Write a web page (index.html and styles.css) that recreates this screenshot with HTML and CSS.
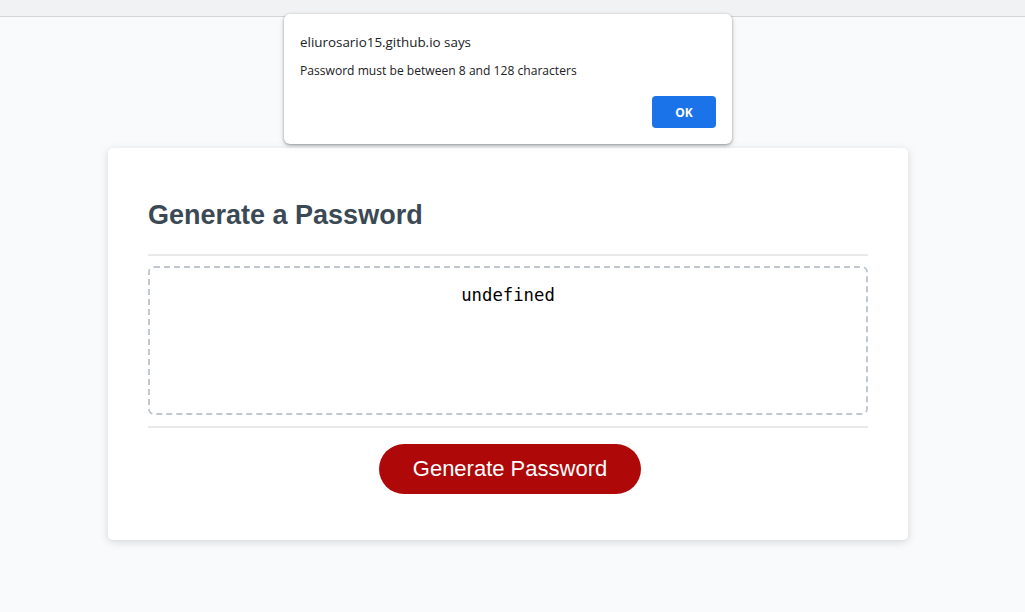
FILE: index.html
```html
<!DOCTYPE html>
<html lang="en">
<head>
<meta charset="UTF-8">
<title>Password Generator</title>
<link rel="stylesheet" href="styles.css">
</head>
<body>
<div class="topbar"></div>
<div class="wrapper">
  <div class="card">
    <div class="card-header">
      <h2>Generate a Password</h2>
    </div>
    <div class="card-body">
      <textarea readonly id="password" class="password" aria-label="Generated Password">undefined</textarea>
    </div>
    <div class="card-footer">
      <button class="btn">Generate Password</button>
    </div>
  </div>
</div>
<div class="dialog" role="alertdialog">
  <div class="dialog-title">eliurosario15.github.io says</div>
  <div class="dialog-msg">Password must be between 8 and 128 characters</div>
  <div class="dialog-actions">
    <button class="dialog-ok">OK</button>
  </div>
</div>
</body>
</html>
```

FILE: styles.css
```css
* { box-sizing: border-box; }

html, body {
  margin: 0;
  padding: 0;
  height: 100%;
}

body {
  font-family: "Liberation Sans", Arial, sans-serif;
  background-color: #f9fafb;
  overflow: hidden;
}

.topbar {
  height: 17px;
  background: #f1f2f3;
  border-bottom: 1px solid #d3d4d6;
}

.wrapper {
  padding: 131px 9px 0 0;
}

.card {
  background-color: #fff;
  border-radius: 5px;
  box-shadow: rgba(0, 0, 0, 0.15) 0 2px 8px 0;
  color: hsl(206, 17%, 28%);
  font-size: 18px;
  margin: 0 auto;
  width: 800px;
  padding: 30px 40px;
}

.card-header::after {
  content: "";
  display: block;
  width: 100%;
  background: #e7e9eb;
  height: 2px;
}

.card-header h2 {
  margin: 0;
  padding: 22px 0 23px;
  font-size: 27px;
  line-height: 31px;
  font-weight: bold;
  color: hsl(206, 17%, 28%);
}

.card-body {
  min-height: 100px;
}

.password {
  appearance: none;
  display: block;
  width: 100%;
  height: 149px;
  padding: 16px 15px 0;
  margin: 10px 0 11px;
  font-family: "DejaVu Sans Mono", "Liberation Mono", monospace;
  font-size: 17.3px;
  line-height: 22px;
  text-align: center;
  color: #000;
  border: 2px dashed #c0c7cf;
  border-radius: 6px;
  resize: none;
  overflow: hidden;
  background: #fff;
}

.card-footer {
  text-align: center;
}

.card-footer::before {
  content: "";
  display: block;
  width: 100%;
  background: #e7e9eb;
  height: 2px;
}

.btn {
  border: none;
  background-color: hsl(360, 91%, 36%);
  border-radius: 25px;
  color: #fff;
  display: inline-block;
  font-family: "Liberation Sans", Arial, sans-serif;
  font-size: 22px;
  line-height: 22px;
  margin: 16px 16px 16px 20px;
  padding: 14px 34px;
  text-align: center;
  cursor: pointer;
}

.dialog {
  position: absolute;
  left: 284px;
  top: 14px;
  width: 448px;
  height: 130px;
  background: #fff;
  border-radius: 6px;
  box-shadow: 0 1px 3px rgba(0,0,0,0.35), 0 2px 6px rgba(0,0,0,0.12);
  padding: 19px 16px 0;
  font-family: "Open Sans", "Noto Sans", sans-serif;
  color: #202124;
}

.dialog-title {
  font-size: 13.4px;
  line-height: 18px;
}

.dialog-msg {
  margin-top: 12px;
  font-size: 12.1px;
  line-height: 16px;
}

.dialog-actions {
  display: flex;
  justify-content: flex-end;
  margin-top: 17px;
}

.dialog-ok {
  width: 64px;
  height: 32px;
  border: none;
  border-radius: 4px;
  background: #1a73e8;
  color: #fff;
  font-family: "Open Sans", "Noto Sans", sans-serif;
  font-weight: bold;
  font-size: 12px;
  cursor: pointer;
}
```
